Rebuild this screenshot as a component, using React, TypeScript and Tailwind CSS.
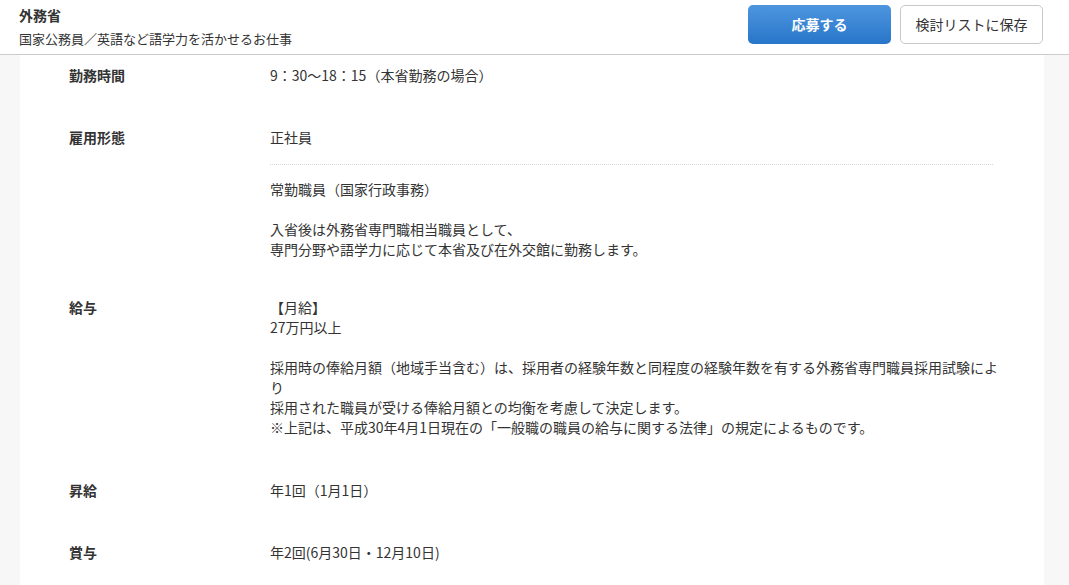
const FONT = "font-['Noto_Sans_CJK_JP','Noto_Sans',sans-serif]";

type Row = { label: string; body: React.ReactNode; pad: string };

const rows: Row[] = [
  { label: "勤務時間", pad: "pt-[10px] pb-[21px]", body: <p>9：30〜18：15（本省勤務の場合）</p> },
  {
    label: "雇用形態",
    pad: "pt-[21px] pb-[17px]",
    body: (
      <div>
        <p className="pb-[17px] border-b border-dotted border-[#d6d6d6] w-[723px]">正社員</p>
        <div className="pt-[14px]">
          <p>常勤職員（国家行政事務）</p>
          <p className="mt-5">入省後は外務省専門職相当職員として、</p>
          <p>専門分野や語学力に応じて本省及び在外交館に勤務します。</p>
        </div>
      </div>
    ),
  },
  {
    label: "給与",
    pad: "pt-[21px] pb-[22px]",
    body: (
      <div>
        <p>【月給】</p>
        <p>27万円以上</p>
        <p className="mt-5">
          採用時の俸給月額（地域手当含む）は、採用者の経験年数と同程度の経験年数を有する外務省専門職員採用試験により
        </p>
        <p>採用された職員が受ける俸給月額との均衡を考慮して決定します。</p>
        <p>※上記は、平成30年4月1日現在の「一般職の職員の給与に関する法律」の規定によるものです。</p>
      </div>
    ),
  },
  { label: "昇給", pad: "pt-[21px] pb-[21px]", body: <p>年1回（1月1日）</p> },
  { label: "賞与", pad: "pt-[21px] pb-[21px]", body: <p>年2回(6月30日・12月10日)</p> },
];

export default function App() {
  return (
    <div className={`w-[1069px] h-[585px] overflow-hidden bg-[#f7f7f7] text-[#333] ${FONT}`}>
      <header className="h-[55px] bg-white border-b border-[#cccccc] flex items-start justify-between pl-[19px] pr-[26px]">
        <div className="pt-[4px]">
          <h1 className="text-[14px] font-bold leading-[22px]">外務省</h1>
          <p className="text-[13px] leading-[22px] mt-[2px]">国家公務員／英語など語学力を活かせるお仕事</p>
        </div>
        <div className="flex gap-[9px] pt-[5px]">
          <button className="w-[143px] h-[39px] rounded-[5px] bg-gradient-to-b from-[#4d95de] to-[#2776ca] text-white text-[14px] font-bold">
            応募する
          </button>
          <button className="w-[143px] h-[39px] rounded-[5px] bg-white border border-[#c8c8c8] text-[#333] text-[14px]">
            検討リストに保存
          </button>
        </div>
      </header>
      <main className="ml-[20px] mr-[25px] bg-white min-h-[600px] pl-[49px]">
        {rows.map((r) => (
          <div key={r.label} className={`flex text-[14px] leading-[20px] ${r.pad}`}>
            <div className="w-[201px] shrink-0 font-bold">{r.label}</div>
            <div className="w-[733px]">{r.body}</div>
          </div>
        ))}
      </main>
    </div>
  );
}
